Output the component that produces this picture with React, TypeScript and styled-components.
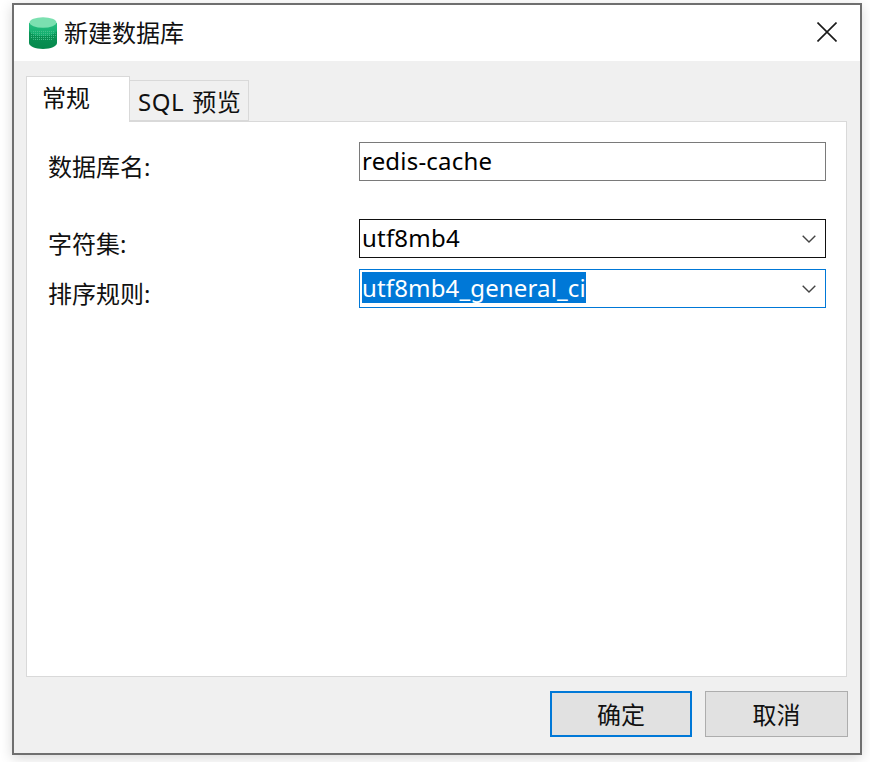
import React from 'react';
import styled, { createGlobalStyle } from 'styled-components';

const UI_FONT = '"Noto Sans", "Noto Sans CJK SC", sans-serif';

const GlobalStyle = createGlobalStyle`
  html, body {
    margin: 0;
    padding: 0;
    background: #fff;
  }
  body {
    font-family: ${UI_FONT};
  }
`;

const Page = styled.div`
  width: 870px;
  height: 762px;
  padding: 3px 0 0 12px;
  box-sizing: border-box;
  overflow: hidden;
`;

const Window = styled.div`
  width: 850px;
  height: 752px;
  box-sizing: border-box;
  border: 2px solid #6f6f6f;
  background: #f0f0f0;
  box-shadow: 0 3px 12px rgba(0, 0, 0, 0.16);
  display: flex;
  flex-direction: column;
`;

const TitleBar = styled.div`
  height: 56px;
  flex: none;
  background: #fff;
  display: flex;
  align-items: center;
  padding: 0 23px 0 15px;

  svg {
    margin-bottom: 1px;
  }
`;

const TitleText = styled.div`
  margin-left: 7px;
  flex: 1;
  font-size: 24px;
  line-height: 32px;
  color: #111;
`;

const Body = styled.div`
  flex: 1;
  display: flex;
  flex-direction: column;
  padding: 15px 13px 0 12px;
`;

const TabRow = styled.div`
  height: 45px;
  flex: none;
  display: flex;
  align-items: flex-end;
`;

const Tab = styled.div<{ $active?: boolean }>`
  box-sizing: border-box;
  width: ${(p) => (p.$active ? '104px' : '119px')};
  height: ${(p) => (p.$active ? '46px' : '41px')};
  margin-bottom: ${(p) => (p.$active ? '-1px' : '0')};
  position: relative;
  z-index: ${(p) => (p.$active ? 1 : 0)};
  border: 1px solid #d9d9d9;
  border-left-width: ${(p) => (p.$active ? '1px' : '0')};
  border-bottom-width: ${(p) => (p.$active ? '0' : '1px')};
  background: ${(p) => (p.$active ? '#fff' : '#f0f0f0')};
  padding-left: ${(p) => (p.$active ? '15px' : '8px')};
  padding-top: 2px;
  font-size: 24px;
  line-height: 38px;
  letter-spacing: ${(p) => (p.$active ? '0' : '0.6px')};
  word-spacing: ${(p) => (p.$active ? '0' : '1px')};
  color: #111;
  white-space: nowrap;
`;

const Panel = styled.div`
  height: 556px;
  flex: none;
  box-sizing: border-box;
  border: 1px solid #d9d9d9;
  background: #fff;
  padding: 20px 20px 0 21px;
`;

const Field = styled.div<{ $gap?: number }>`
  display: grid;
  grid-template-columns: 311px 467px;
  height: 39px;
  margin-top: ${(p) => p.$gap ?? 0}px;
`;

const Label = styled.div`
  font-size: 24px;
  line-height: 32px;
  padding-top: 9px;
  color: #111;
  white-space: nowrap;
`;

const Box = styled.div<{ $border?: string }>`
  box-sizing: border-box;
  height: 39px;
  border: 1px solid ${(p) => p.$border ?? '#7a7a7a'};
  background: #fff;
  display: flex;
  align-items: center;
  justify-content: space-between;
  padding: 0 9px 2px 2px;
  font-size: 24px;
  letter-spacing: 0.2px;
  color: #000;

  svg {
    margin-top: 2px;
  }
`;

const Selected = styled.span`
  background: #0078d7;
  color: #fff;
  line-height: 31px;
  height: 31px;
  display: block;
  letter-spacing: 0.15px;
`;

const Footer = styled.div`
  display: flex;
  justify-content: flex-end;
  gap: 13px;
  margin-top: 14px;
  margin-right: -1px;
`;

const Button = styled.div<{ $primary?: boolean }>`
  box-sizing: border-box;
  width: ${(p) => (p.$primary ? '142px' : '143px')};
  height: 46px;
  border: ${(p) => (p.$primary ? '2px solid #0078d7' : '1px solid #adadad')};
  background: #e1e1e1;
  display: flex;
  align-items: center;
  justify-content: center;
  padding-bottom: 2px;
  font-size: 24px;
  color: #111;
`;

const DatabaseIcon = () => (
  <svg width="28" height="32" viewBox="0 0 28 32">
    <defs>
      <linearGradient id="dbTop" x1="0" y1="0" x2="0" y2="1">
        <stop offset="0" stopColor="#27bd80" />
        <stop offset="1" stopColor="#12ad6c" />
      </linearGradient>
      <linearGradient id="dbBottom" x1="0" y1="0" x2="0" y2="1">
        <stop offset="0" stopColor="#0c9c5d" />
        <stop offset="1" stopColor="#06884c" />
      </linearGradient>
      <pattern id="dbDots" width="2" height="2" patternUnits="userSpaceOnUse">
        <rect width="1" height="1" fill="#45c08c" />
      </pattern>
      <clipPath id="dbDotArea">
        <ellipse cx="14" cy="18" rx="13" ry="7" />
      </clipPath>
    </defs>
    <path d="M0 6v20c0 3.2 6.3 6 14 6s14-2.8 14-6V6z" fill="url(#dbBottom)" />
    <path d="M0 6v7c0 3.2 6.3 6 14 6s14-2.8 14-6V6z" fill="url(#dbTop)" />
    <rect x="1" y="14" width="26" height="10" fill="url(#dbDots)" clipPath="url(#dbDotArea)" />
    <ellipse cx="14" cy="5.5" rx="13.5" ry="5.2" fill="#7be0b0" />
  </svg>
);

const CloseIcon = () => (
  <svg width="20" height="20" viewBox="0 0 20 20" style={{ marginBottom: 2 }}>
    <path d="M0.5 0.5l19 19M19.5 0.5l-19 19" stroke="#1a1a1a" strokeWidth="1.6" fill="none" />
  </svg>
);

const Chevron = () => (
  <svg width="14" height="8" viewBox="0 0 14 8">
    <path d="M0.7 0.7L7 7L13.3 0.7" stroke="#444" strokeWidth="1.4" fill="none" />
  </svg>
);

const App: React.FunctionComponent = () => {
  return (
    <Page>
      <GlobalStyle />
      <Window>
        <TitleBar>
          <DatabaseIcon />
          <TitleText>新建数据库</TitleText>
          <CloseIcon />
        </TitleBar>
        <Body>
          <TabRow>
            <Tab $active>常规</Tab>
            <Tab>SQL 预览</Tab>
          </TabRow>
          <Panel>
            <Field>
              <Label>数据库名:</Label>
              <Box>redis-cache</Box>
            </Field>
            <Field $gap={38}>
              <Label>字符集:</Label>
              <Box $border="#111">
                utf8mb4
                <Chevron />
              </Box>
            </Field>
            <Field $gap={11}>
              <Label>排序规则:</Label>
              <Box $border="#0078d7">
                <Selected>utf8mb4_general_ci</Selected>
                <Chevron />
              </Box>
            </Field>
          </Panel>
          <Footer>
            <Button $primary>确定</Button>
            <Button>取消</Button>
          </Footer>
        </Body>
      </Window>
    </Page>
  );
};

export default App;
